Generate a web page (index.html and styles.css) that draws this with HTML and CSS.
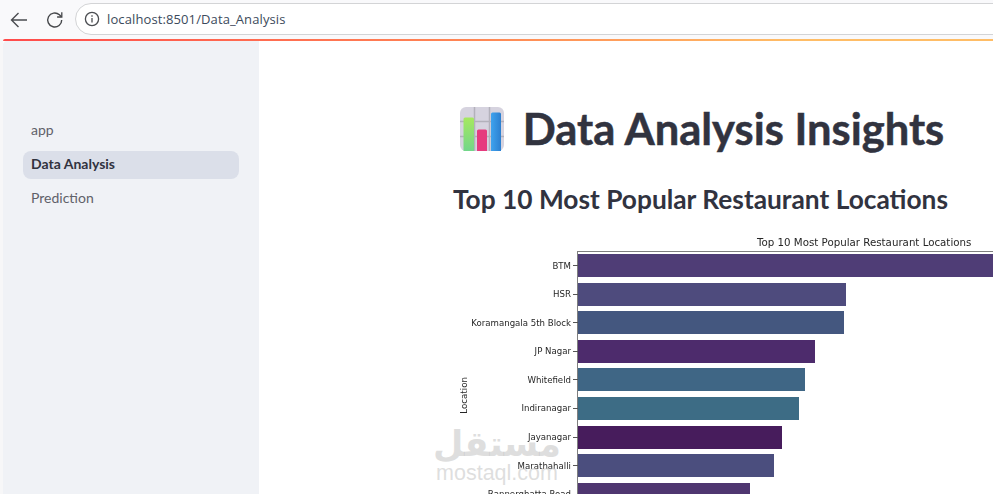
FILE: index.html
```html
<!DOCTYPE html>
<html lang="en">
<head>
<meta charset="utf-8">
<title>Data Analysis</title>
<link rel="stylesheet" href="styles.css">
</head>
<body>
<header class="toolbar">
  <svg class="icon-back" width="20" height="20" viewBox="0 0 20 20" fill="none" stroke="#4a4c50" stroke-width="1.4"><path d="M18 10H2.5M9.500 3 2.500 10l7 7"/></svg>
  <svg class="icon-reload" width="18" height="18" viewBox="0 0 18 18" fill="none" stroke="#45474a" stroke-width="1.4"><path d="M15.700 8.900a7 7 0 1 1-2.300-5.100l2 1.900"/><path d="M15.800 1.300v4.700h-4.700" stroke-width="1.300"/></svg>
  <div class="urlbar">
    <svg class="icon-info" width="16" height="16" viewBox="0 0 16 16" fill="none" stroke="#4a4c50" stroke-width="1.300"><circle cx="8" cy="8" r="6.600"/><path d="M8 7v4.500"/><path d="M8 4.300v1.400"/></svg>
    <span class="url">localhost:8501/Data_Analysis</span>
  </div>
</header>
<div class="page">
  <div class="gradient"></div>
  <div class="app">
    <aside class="sidebar">
      <nav class="nav">
        <a class="nav-item">app</a>
        <a class="nav-item active">Data Analysis</a>
        <a class="nav-item">Prediction</a>
      </nav>
    </aside>
    <main class="main">
      <div class="content">
        <h1 class="title">
          <svg class="emoji" width="44" height="44" viewBox="0 0 44 44">
            <defs>
              <linearGradient id="g1" x1="0" y1="0" x2="0" y2="1"><stop offset="0" stop-color="#a6e85f"/><stop offset="1" stop-color="#72d68a"/></linearGradient>
              <linearGradient id="g2" x1="0" y1="0" x2="1" y2="0"><stop offset="0" stop-color="#3fa3ee"/><stop offset="1" stop-color="#2c7fd0"/></linearGradient>
            </defs>
            <rect width="44" height="44" rx="6" fill="#d6d3df"/>
            <path d="M0 14.500H44M0 29.500H44M14.500 0V44M29.500 0V44" stroke="#b3b1bb" stroke-width="1.500"/>
            <path d="M3.500 44V12a1.500 1.500 0 0 1 1.500-1.500h7.500A1.500 1.500 0 0 1 14 12V44Z" fill="url(#g1)"/>
            <path d="M17 44V24a1.500 1.500 0 0 1 1.500-1.500h7a1.500 1.500 0 0 1 1.500 1.500V44Z" fill="#e63b7e"/>
            <path d="M31 44V7a1.500 1.500 0 0 1 1.500-1.500h7A1.500 1.500 0 0 1 41 7V44Z" fill="url(#g2)"/>
          </svg>
          <span class="title-text">Data Analysis Insights</span>
        </h1>
        <h2 class="subtitle">Top 10 Most Popular Restaurant Locations</h2>
        <figure class="chart">
          <div class="y-title-col"><span class="y-title">Location</span></div>
          <div class="plot-area">
            <figcaption class="chart-title">Top 10 Most Popular Restaurant Locations</figcaption>
            <div class="rows">
              <div class="row"><span class="label">BTM</span><span class="tick"></span><span class="bar" style="width:460px;background:#4f3d76"></span></div>
              <div class="row"><span class="label">HSR</span><span class="tick"></span><span class="bar" style="width:268px;background:#4e4b7d"></span></div>
              <div class="row"><span class="label">Koramangala 5th Block</span><span class="tick"></span><span class="bar" style="width:266px;background:#44577f"></span></div>
              <div class="row"><span class="label">JP Nagar</span><span class="tick"></span><span class="bar" style="width:237px;background:#4d2b6c"></span></div>
              <div class="row"><span class="label">Whitefield</span><span class="tick"></span><span class="bar" style="width:227px;background:#3f6685"></span></div>
              <div class="row"><span class="label">Indiranagar</span><span class="tick"></span><span class="bar" style="width:221px;background:#3d6c85"></span></div>
              <div class="row"><span class="label">Jayanagar</span><span class="tick"></span><span class="bar" style="width:204px;background:#471c5c"></span></div>
              <div class="row"><span class="label">Marathahalli</span><span class="tick"></span><span class="bar" style="width:196px;background:#4b4e7e"></span></div>
              <div class="row"><span class="label">Bannerghatta Road</span><span class="tick"></span><span class="bar" style="width:172px;background:#4f3670"></span></div>
            </div>
          </div>
        </figure>
      </div>
    </main>
  </div>
  <div class="watermark"><span class="wm-ar" dir="rtl">مستقل</span><span class="wm-en">mostaql.com</span></div>
</div>
</body>
</html>
```
FILE: styles.css
```css
* { box-sizing: border-box; }
html, body { margin: 0; height: 494px; overflow: hidden; background: #fff; }
body { font-family: "Lato", "Noto Sans", sans-serif; color: #31333f; }

.toolbar {
  height: 39px;
  background: #f9f9fb;
  display: flex;
  align-items: center;
  position: relative;
  padding-left: 9px;
}
.icon-back { flex: none; }
.icon-reload { flex: none; margin-left: 17px; }
.urlbar {
  flex: none;
  width: 1000px;
  height: 32px;
  margin-left: 11px;
  margin-top: -1px;
  background: #fff;
  border: 1px solid #d3d4d6;
  border-radius: 16px;
  display: flex;
  align-items: center;
  padding-left: 8px;
}
.icon-info { flex: none; }
.url {
  margin-left: 7px;
  font-family: "Open Sans", sans-serif;
  font-size: 13px;
  letter-spacing: 0.11px;
  color: #3c4a5c;
  white-space: nowrap;
}

.page { position: relative; height: 455px; padding-left: 3px; background: #f7f7f8; overflow: hidden; }
.gradient {
  height: 2px;
  background: linear-gradient(90deg, #ff4b4b 0%, #ff8a55 50%, #ffbd66 80%, #ffbd66 100%);
  border-top-left-radius: 4px;
}
.app { display: flex; height: 453px; background: #fff; }
.sidebar { flex: none; width: 256px; background: #f0f2f6; padding: 76px 20px 0; border-top-left-radius: 4px; }
.nav { display: flex; flex-direction: column; gap: 6px; }
.nav-item {
  height: 28px;
  line-height: 26px;
  padding-left: 8px;
  border-radius: 8px;
  font-size: 14px;
  color: #5f6169;
}
.nav-item.active { background: #dbdfe9; color: #31333f; font-weight: 700; }

.main { flex: 1; min-width: 0; overflow: hidden; padding-left: 191px; padding-top: 62px; }
.content { width: 504px; }
.title {
  margin: 0;
  height: 52px;
  display: flex;
  align-items: center;
  justify-content: center;
  gap: 19px;
  font-size: 43.500px;
  font-weight: 700;
  line-height: 48px;
  white-space: nowrap;
}
.title-text { padding-bottom: 2px; -webkit-text-stroke: 0.5px #31333f; }
.emoji { flex: none; }
.subtitle {
  margin: 26px 0 0;
  padding-right: 3px;
  font-size: 26.300px;
  font-weight: 700;
  line-height: 36px;
  text-align: center;
  white-space: nowrap;
}

.chart {
  margin: 19px 0 0 9px;
  display: flex;
  width: 560px;
  font-family: "DejaVu Sans", sans-serif;
  color: #262626;
  filter: blur(0.25px);
}
.y-title-col { flex: none; width: 9px; padding-top: 141px; }
.y-title { display: block; font-size: 8.700px; writing-mode: vertical-rl; transform: rotate(180deg); }
.plot-area { flex: 1; min-width: 0; }
.chart-title { height: 15px; padding-left: 289px; font-size: 10.250px; line-height: 12px; white-space: nowrap; }
.rows {
  display: flex;
  flex-direction: column;
  gap: 5.600px;
  padding-top: 2px;
  margin-left: 109px;
  border-top: 1px solid #7f7f7f;
  border-left: 1px solid #7f7f7f;
  position: relative;
}
.row { position: relative; height: 23px; display: flex; align-items: center; }
.label {
  position: absolute;
  right: calc(100% + 7px);
  font-size: 8.600px;
  white-space: nowrap;
}
.tick { position: absolute; left: -5px; width: 5px; height: 1px; background: #555; }
.bar { display: block; height: 23px; flex: none; }

.watermark {
  position: absolute;
  left: 429px;
  top: 386px;
  width: 136px;
  display: flex;
  flex-direction: column;
  align-items: center;
  color: rgba(190, 190, 190, 0.5);
  pointer-events: none;
}
.wm-ar { font-family: "DejaVu Sans", sans-serif; font-weight: 700; font-size: 35px; line-height: 38px; }
.wm-en { font-family: "Liberation Sans", sans-serif; font-size: 21.500px; line-height: 20px; }
```
